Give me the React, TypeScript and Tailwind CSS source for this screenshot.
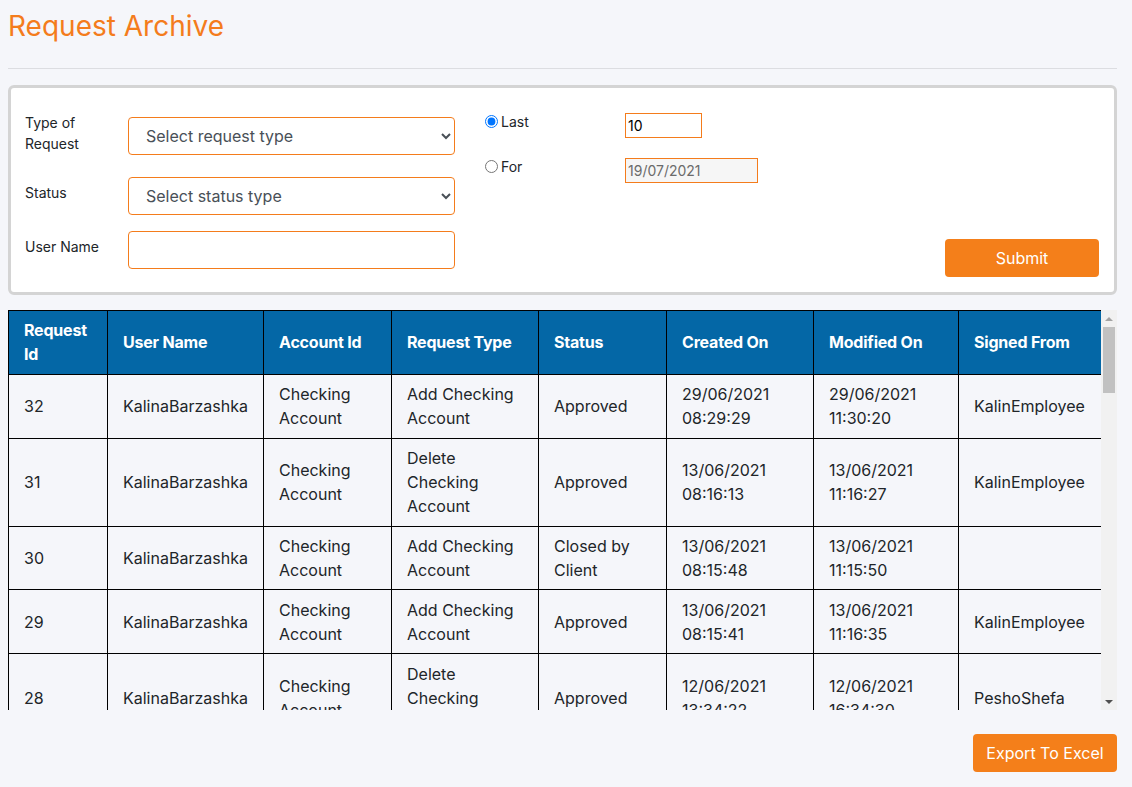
import React from 'react';

const rows = [
  { id: '32', user: 'KalinaBarzashka', account: ['Checking', 'Account'], type: ['Add Checking', 'Account'], status: ['Approved'], created: ['29/06/2021', '08:29:29'], modified: ['29/06/2021', '11:30:20'], signed: 'KalinEmployee' },
  { id: '31', user: 'KalinaBarzashka', account: ['Checking', 'Account'], type: ['Delete', 'Checking', 'Account'], status: ['Approved'], created: ['13/06/2021', '08:16:13'], modified: ['13/06/2021', '11:16:27'], signed: 'KalinEmployee' },
  { id: '30', user: 'KalinaBarzashka', account: ['Checking', 'Account'], type: ['Add Checking', 'Account'], status: ['Closed by', 'Client'], created: ['13/06/2021', '08:15:48'], modified: ['13/06/2021', '11:15:50'], signed: '' },
  { id: '29', user: 'KalinaBarzashka', account: ['Checking', 'Account'], type: ['Add Checking', 'Account'], status: ['Approved'], created: ['13/06/2021', '08:15:41'], modified: ['13/06/2021', '11:16:35'], signed: 'KalinEmployee' },
  { id: '28', user: 'KalinaBarzashka', account: ['Checking', 'Account'], type: ['Delete', 'Checking', 'Account'], status: ['Approved'], created: ['12/06/2021', '13:34:22'], modified: ['12/06/2021', '16:34:30'], signed: 'PeshoShefa' },
];

const headers = ['Request Id', 'User Name', 'Account Id', 'Request Type', 'Status', 'Created On', 'Modified On', 'Signed From'];
const widths = ['w-[99px]', 'w-[156px]', 'w-[128px]', 'w-[147px]', 'w-[128px]', 'w-[147px]', 'w-[145px]', 'w-[143px]'];

const Lines = ({ lines }: { lines: string[] }) => (
  <>
    {lines.map((l, i) => (
      <div key={i}>{l}</div>
    ))}
  </>
);

const App: React.FC = () => {
  return (
    <div className="min-h-[787px] bg-[#f5f6fa] pl-2 pr-[15px] text-[#212529] font-['Inter',sans-serif]">
      <h1 className="pt-[9px] text-[28px] leading-[34px] text-[#f47c1c]">Request Archive</h1>
      <hr className="mt-[25px] border-t border-[#dcdde1]" />

      {/* filter panel */}
      <div className="mt-[16px] flex rounded-md border-[3px] border-[#d4d4d4] bg-white">
        <div className="flex flex-col pl-[14px] pt-[29px] pb-[23px] text-[14px] leading-[21px]">
          <div className="flex items-start">
            <label className="mt-[-5px] w-[103px]">Type of<br />Request</label>
            <select className="h-[38px] w-[327px] rounded border border-[#f47c1c] pl-[13px] pr-2 text-[16px] text-[#495057]">
              <option>Select request type</option>
            </select>
          </div>
          <div className="mt-[22px] flex items-start">
            <label className="mt-[5px] w-[103px]">Status</label>
            <select className="h-[38px] w-[327px] rounded border border-[#f47c1c] pl-[13px] pr-2 text-[16px] text-[#495057]">
              <option>Select status type</option>
            </select>
          </div>
          <div className="mt-[16px] flex items-start">
            <label className="mt-[5px] w-[103px]">User Name</label>
            <input className="h-[38px] w-[327px] rounded border border-[#f47c1c] px-3 text-[16px]" />
          </div>
        </div>

        <div className="ml-[30px] flex flex-col pt-[25px] text-[14px]">
          <div className="flex items-start">
            <label className="mt-[-2px] flex w-[140px] items-center gap-[3px]">
              <input type="radio" name="range" defaultChecked className="m-0 h-[13px] w-[13px] accent-[#0075ff]" />
              <span>Last</span>
            </label>
            <input defaultValue="10" className="h-[25px] w-[77px] border border-[#f47c1c] px-[2px] text-[14px] text-black" />
          </div>
          <div className="mt-[20px] flex items-start">
            <label className="mt-[-2px] flex w-[140px] items-center gap-[3px]">
              <input type="radio" name="range" className="m-0 h-[13px] w-[13px]" />
              <span>For</span>
            </label>
            <input readOnly defaultValue="19/07/2021" className="h-[25px] w-[133px] border border-[#f47c1c] bg-[#f6f6f6] px-[2px] text-[14px] text-[#6b6b6b]" />
          </div>
        </div>

        <div className="flex flex-1 items-end justify-end pb-[15px] pr-[15px]">
          <button className="h-[38px] w-[154px] rounded bg-[#f47f1a] text-[16px] text-white">Submit</button>
        </div>
      </div>

      {/* table */}
      <div className="mt-[15px] flex h-[400px] w-[1109px]">
        <div className="h-full w-[1093px] overflow-hidden">
          <table className="w-[1093px] table-fixed border-collapse text-[16px] leading-[24px]">
            <thead>
              <tr className="bg-[#0467a6] text-white">
                {headers.map((h, i) => (
                  <th key={h} className={`${widths[i]} h-[64px] border border-black px-[15px] pb-[2px] text-left font-bold tracking-[-0.2px]`}>
                    {h === 'Request Id' ? (<>Request<br />Id</>) : h}
                  </th>
                ))}
              </tr>
            </thead>
            <tbody>
              {rows.map((r) => (
                <tr key={r.id} className="bg-[#f5f6fa]">
                  <td className="border border-black px-[15px] py-[7.4px]">{r.id}</td>
                  <td className="border border-black px-[15px] py-[7.4px]">{r.user}</td>
                  <td className="border border-black px-[15px] py-[7.4px]"><Lines lines={r.account} /></td>
                  <td className="border border-black px-[15px] py-[7.4px]"><Lines lines={r.type} /></td>
                  <td className="border border-black px-[15px] py-[7.4px]"><Lines lines={r.status} /></td>
                  <td className="border border-black px-[15px] py-[7.4px]"><Lines lines={r.created} /></td>
                  <td className="border border-black px-[15px] py-[7.4px]"><Lines lines={r.modified} /></td>
                  <td className="border border-black px-[15px] py-[7.4px]">{r.signed}</td>
                </tr>
              ))}
            </tbody>
          </table>
        </div>
        {/* scrollbar */}
        <div className="flex h-full w-[16px] flex-col items-center bg-[#f1f1f1]">
          <div className="flex h-[17px] items-center justify-center">
            <div className="h-0 w-0 border-x-[4px] border-b-[4px] border-x-transparent border-b-[#a3a3a3]" />
          </div>
          <div className="h-[66px] w-[12px] bg-[#c1c1c1]" />
          <div className="flex-1" />
          <div className="flex h-[17px] items-center justify-center">
            <div className="h-0 w-0 border-x-[4px] border-t-[4px] border-x-transparent border-t-[#505050]" />
          </div>
        </div>
      </div>

      <div className="mt-[24px] flex w-[1109px] justify-end">
        <button className="h-[38px] w-[144px] rounded bg-[#f47f1a] text-[16px] text-white">Export To Excel</button>
      </div>
    </div>
  );
};

export default App;
